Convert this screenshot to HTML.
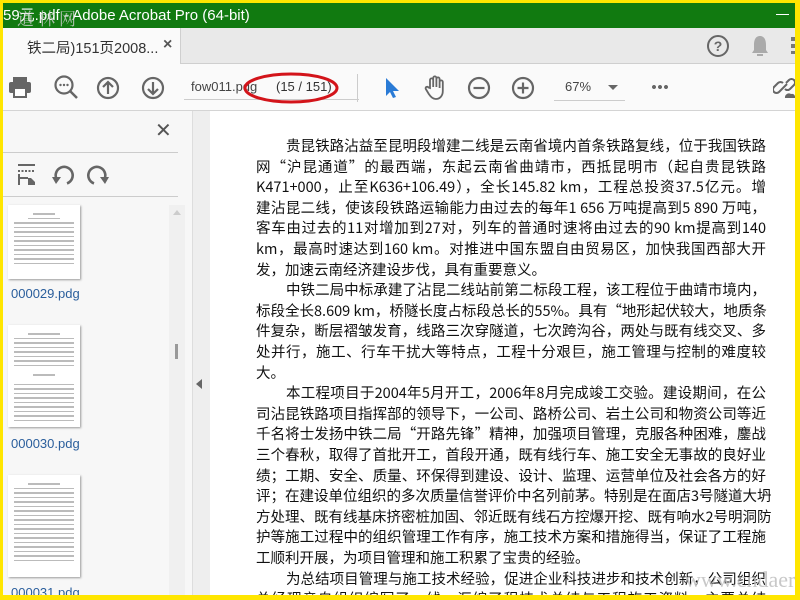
<!DOCTYPE html>
<html><head><meta charset="utf-8">
<style>
*{margin:0;padding:0;box-sizing:border-box}
body{width:800px;height:600px;overflow:hidden;background:#ffe600;position:relative;font-family:"Liberation Sans","Noto Sans CJK SC",sans-serif}
.abs{position:absolute}
#title{left:3px;top:3px;width:792px;height:25px;background:#117a10;color:#fff;font-size:15px;line-height:25px;padding-left:0}
#tabbar{left:3px;top:28px;width:792px;height:36px;background:#e9e9e9;border-bottom:1px solid #cfcfcf}
#tab{left:0;top:0;width:178px;height:36px;background:#fafafa;border-right:1px solid #cfcfcf}
#toolbar{left:3px;top:64px;width:792px;height:47px;background:#fafafa;border-bottom:1px solid #d4d4d4}
#left{left:3px;top:111px;width:189px;height:489px;background:#f7f7f7}
#strip{left:192px;top:111px;width:18px;height:489px;background:#eeeeee;border-left:1px solid #ddd}
#page{left:210px;top:111px;width:585px;height:489px;background:#fff;overflow:hidden}
.ln{position:absolute;left:46px;width:510px;font-family:"Noto Sans CJK SC","WenQuanYi Zen Hei",sans-serif;font-size:14.5px;color:#111;text-align:justify;text-align-last:justify;white-space:nowrap;line-height:20px;height:20px}
.ln.l{text-align-last:left}
.ind{padding-left:30px}
.lbl{font-size:13px;color:#2a5e9c}
.thumb{position:absolute;left:5px;width:72px;background:#fff;box-shadow:1px 1px 2px #999}
.thumb i{display:block;height:1.5px;background:#bbb;margin:3px 6px}
</style></head><body>
<div id="title" class="abs">59元.pdf - Adobe Acrobat Pro (64-bit)
<span class="abs" style="left:14px;top:2px;font-family:'Noto Serif CJK SC',serif;font-size:17px;color:#cfcfcf;opacity:.8;letter-spacing:4px">道林网</span>
<span class="abs" style="right:6px;top:11px;width:13px;height:1px;background:#fff"></span></div>
<div id="tabbar" class="abs">
 <div id="tab" class="abs"><span class="abs" style="left:24px;top:9px;font-size:14.5px;color:#333;font-family:'Liberation Sans','Noto Sans CJK SC',sans-serif">铁二局)151页2008...</span><span class="abs" style="left:160px;top:8px;font-size:16px;color:#555;font-weight:bold">×</span></div>
 <svg class="abs" style="left:703px;top:6px" width="24" height="24"><circle cx="12" cy="12" r="10" fill="none" stroke="#666" stroke-width="2"/><text x="12" y="17" font-size="14" text-anchor="middle" fill="#666" font-family="Liberation Sans" font-weight="bold">?</text></svg>
 <svg class="abs" style="left:746px;top:6px" width="22" height="24"><path d="M11 2c-5 0-6 5-6 9v5l-2 3h16l-2-3v-5c0-4-1-9-6-9zM8 20h6v2H8z" fill="#aaa"/></svg>
 <div class="abs" style="left:788px;top:9px;width:4px;height:17px;background:repeating-linear-gradient(#777 0 4px,transparent 4px 7px)"></div>
</div>
<div id="toolbar" class="abs">
 <svg class="abs" style="left:5px;top:11px" width="24" height="24"><rect x="5" y="2" width="14" height="5" fill="#666"/><rect x="1" y="7" width="22" height="11" rx="2" fill="#666"/><rect x="6" y="13" width="12" height="9" fill="#fff" stroke="#666" stroke-width="2"/></svg>
 <svg class="abs" style="left:50px;top:10px" width="28" height="28"><circle cx="11" cy="11" r="8.5" fill="none" stroke="#666" stroke-width="2.2"/><line x1="17" y1="17" x2="24" y2="24" stroke="#666" stroke-width="2.5"/><circle cx="7.5" cy="11" r="1.2" fill="#666"/><circle cx="11" cy="11" r="1.2" fill="#666"/><circle cx="14.5" cy="11" r="1.2" fill="#666"/></svg>
 <svg class="abs" style="left:93px;top:12px" width="24" height="24"><circle cx="12" cy="12" r="10" fill="none" stroke="#666" stroke-width="2.2"/><path d="M12 18V6M7 11l5-5 5 5" fill="none" stroke="#666" stroke-width="2.2"/></svg>
 <svg class="abs" style="left:138px;top:12px" width="24" height="24"><circle cx="12" cy="12" r="10" fill="none" stroke="#666" stroke-width="2.2"/><path d="M12 6v12M7 13l5 5 5-5" fill="none" stroke="#666" stroke-width="2.2"/></svg>
 <div class="abs" style="left:181px;top:0;width:175px;height:36px;border-bottom:1px solid #ccc"></div>
 <span class="abs" style="left:188px;top:15px;font-size:13px;color:#444">fow011.pdg</span>
 <span class="abs" style="left:273px;top:15px;font-size:13px;color:#333">(15 / 151)</span>
 <svg class="abs" style="left:238px;top:6px" width="100" height="36"><ellipse cx="50" cy="18" rx="46" ry="14" fill="none" stroke="#d3141a" stroke-width="3"/></svg>
 <div class="abs" style="left:354px;top:10px;width:1px;height:28px;background:#ccc"></div>
 <svg class="abs" style="left:379px;top:12px" width="18" height="24"><path d="M4 2v18l4-4 3 6 3-1-3-6h6z" fill="#2a7bd6"/></svg>
 <svg class="abs" style="left:420px;top:10px" width="26" height="28"><path d="M7 14V6a1.6 1.6 0 013.2 0v7V4a1.6 1.6 0 013.2 0v9V5a1.6 1.6 0 013.2 0v9V8a1.6 1.6 0 013.2 0v9c0 5-3 8-7 8-3 0-5-2-7-5l-3-5a1.5 1.5 0 012.6-1.5z" fill="none" stroke="#666" stroke-width="1.8"/></svg>
 <svg class="abs" style="left:464px;top:12px" width="24" height="24"><circle cx="12" cy="12" r="10" fill="none" stroke="#666" stroke-width="2.2"/><path d="M6.5 12h11" stroke="#666" stroke-width="2.2"/></svg>
 <svg class="abs" style="left:508px;top:12px" width="24" height="24"><circle cx="12" cy="12" r="10" fill="none" stroke="#666" stroke-width="2.2"/><path d="M6.5 12h11M12 6.5v11" stroke="#666" stroke-width="2.2"/></svg>
 <span class="abs" style="left:562px;top:15px;font-size:13px;color:#444">67%</span>
 <div class="abs" style="left:605px;top:21px;border:5px solid transparent;border-top:5px solid #666"></div>
 <div class="abs" style="left:551px;top:36px;width:71px;height:1px;background:#ccc"></div>
 <div class="abs" style="left:648px;top:21px;width:18px;height:4px;background:radial-gradient(circle,#666 1.8px,transparent 2.2px) 0 0/6px 4px"></div>
 <svg class="abs" style="left:770px;top:10px" width="22" height="28"><path d="M9 15l-3 3a3.5 3.5 0 01-5-5l4-4a3.5 3.5 0 015 0M13 9l3-3a3.5 3.5 0 015 5l-4 4a3.5 3.5 0 01-5 0M8 16l6-6" fill="none" stroke="#666" stroke-width="2"/><path d="M12 24a4 4 0 016-4 3 3 0 014 3v1z" fill="#666"/></svg>
</div>
<div id="left" class="abs">
 <span class="abs" style="left:152px;top:7px;font-size:20px;color:#555">✕</span>
 <div class="abs" style="left:0;top:41px;width:175px;height:1px;background:#ccc"></div>
 <svg class="abs" style="left:14px;top:52px" width="22" height="24"><path d="M1 2h17" stroke="#666" stroke-width="2"/><path d="M1 8h17" stroke="#666" stroke-width="2" stroke-dasharray="2 1.5"/><path d="M2 11v11M2 15h9" fill="none" stroke="#666" stroke-width="2"/><path d="M11 15h3l4 4v3h-7z" fill="#666"/></svg>
 <svg class="abs" style="left:49px;top:53px" width="24" height="24"><path d="M15 19.4A8.5 8.5 0 1 0 4.5 15" fill="none" stroke="#666" stroke-width="2.6"/><path d="M0 13h9l-5 7z" fill="#666"/></svg>
 <svg class="abs" style="left:82px;top:53px" width="24" height="24"><g transform="matrix(-1 0 0 1 24 0)"><path d="M15 19.4A8.5 8.5 0 1 0 4.5 15" fill="none" stroke="#666" stroke-width="2.6"/><path d="M0 13h9l-5 7z" fill="#666"/></g></svg>
 <div class="abs" style="left:0;top:85px;width:175px;height:1px;background:#ccc"></div>
 <div class="thumb" style="top:94px;height:74px"><i style="margin:8px 25px 3px"></i><i style="margin:3px 20px"></i><i></i><i></i><i></i><i></i><i></i><i></i><i></i><i></i><i></i><i></i></div>
 <span class="abs lbl" style="left:8px;top:175px">000029.pdg</span>
 <div class="thumb" style="top:214px;height:102px"><i style="margin:8px 20px 3px"></i><i></i><i></i><i></i><i></i><i></i><i></i><i></i><i style="margin:8px 25px"></i><i></i><i></i><i></i><i></i><i></i><i></i><i></i><i></i><i></i></div>
 <span class="abs lbl" style="left:8px;top:325px">000030.pdg</span>
 <div class="thumb" style="top:364px;height:102px"><i style="margin:8px 20px 3px"></i><i></i><i></i><i></i><i></i><i></i><i></i><i></i><i></i><i></i><i></i><i></i><i></i><i></i><i></i><i></i><i></i><i></i></div>
 <span class="abs lbl" style="left:8px;top:474px">000031.pdg</span>
 <div class="abs" style="left:166px;top:94px;width:16px;height:395px;background:#f0f0f0"></div>
 <div class="abs" style="left:170px;top:99px;border:4px solid transparent;border-bottom:5px solid #ccc;border-top:0"></div>
 <div class="abs" style="left:172px;top:233px;width:3px;height:15px;background:#999"></div>
</div>
<div id="strip" class="abs"><div class="abs" style="left:3px;top:268px;border:5px solid transparent;border-right:6px solid #666;border-left:0"></div></div>
<div id="page" class="abs">
<div class="ln ind" style="top:25px">贵昆铁路沾益至昆明段增建二线是云南省境内首条铁路复线，位于我国铁路</div>
<div class="ln" style="top:45.6px">网“沪昆通道”的最西端，东起云南省曲靖市，西抵昆明市（起自贵昆铁路</div>
<div class="ln" style="top:66.2px">K471+000，止至K636+106.49），全长145.82 km，工程总投资37.5亿元。增</div>
<div class="ln" style="top:86.8px">建沾昆二线，使该段铁路运输能力由过去的每年1 656 万吨提高到5 890 万吨，</div>
<div class="ln" style="top:107.4px">客车由过去的11对增加到27对，列车的普通时速将由过去的90 km提高到140</div>
<div class="ln" style="top:128px">km，最高时速达到160 km。对推进中国东盟自由贸易区，加快我国西部大开</div>
<div class="ln l" style="top:148.6px">发，加速云南经济建设步伐，具有重要意义。</div>
<div class="ln ind" style="top:169.2px">中铁二局中标承建了沾昆二线站前第二标段工程，该工程位于曲靖市境内，</div>
<div class="ln" style="top:189.8px">标段全长8.609 km，桥隧长度占标段总长的55%。具有“地形起伏较大，地质条</div>
<div class="ln" style="top:210.4px">件复杂，断层褶皱发育，线路三次穿隧道，七次跨沟谷，两处与既有线交叉、多</div>
<div class="ln" style="top:231px">处并行，施工、行车干扰大等特点，工程十分艰巨，施工管理与控制的难度较</div>
<div class="ln l" style="top:251.6px">大。</div>
<div class="ln ind" style="top:272.2px">本工程项目于2004年5月开工，2006年8月完成竣工交验。建设期间，在公</div>
<div class="ln" style="top:292.8px">司沾昆铁路项目指挥部的领导下，一公司、路桥公司、岩土公司和物资公司等近</div>
<div class="ln" style="top:313.4px">千名将士发扬中铁二局“开路先锋”精神，加强项目管理，克服各种困难，鏖战</div>
<div class="ln" style="top:334px">三个春秋，取得了首批开工，首段开通，既有线行车、施工安全无事故的良好业</div>
<div class="ln" style="top:354.6px">绩；工期、安全、质量、环保得到建设、设计、监理、运营单位及社会各方的好</div>
<div class="ln" style="top:375.2px">评；在建设单位组织的多次质量信誉评价中名列前茅。特别是在面店3号隧道大坍</div>
<div class="ln" style="top:395.8px">方处理、既有线基床挤密桩加固、邻近既有线石方控爆开挖、既有响水2号明洞防</div>
<div class="ln" style="top:416.4px">护等施工过程中的组织管理工作有序，施工技术方案和措施得当，保证了工程施</div>
<div class="ln l" style="top:437px">工顺利开展，为项目管理和施工积累了宝贵的经验。</div>
<div class="ln ind" style="top:457.6px">为总结项目管理与施工技术经验，促进企业科技进步和技术创新，公司组织</div>
<div class="ln" style="top:478.2px">总经理亲自组织编写了一线，汇编了程技术总结与工程施工资料，主要总结</div>
<span class="abs" style="left:475px;top:456px;font-family:'Liberation Serif',serif;font-size:22px;color:#bbb;opacity:.8">www.cndaer.com</span>
</div>
<div class="abs" style="left:0;top:595px;width:800px;height:5px;background:#ffe600"></div>
</body></html>
